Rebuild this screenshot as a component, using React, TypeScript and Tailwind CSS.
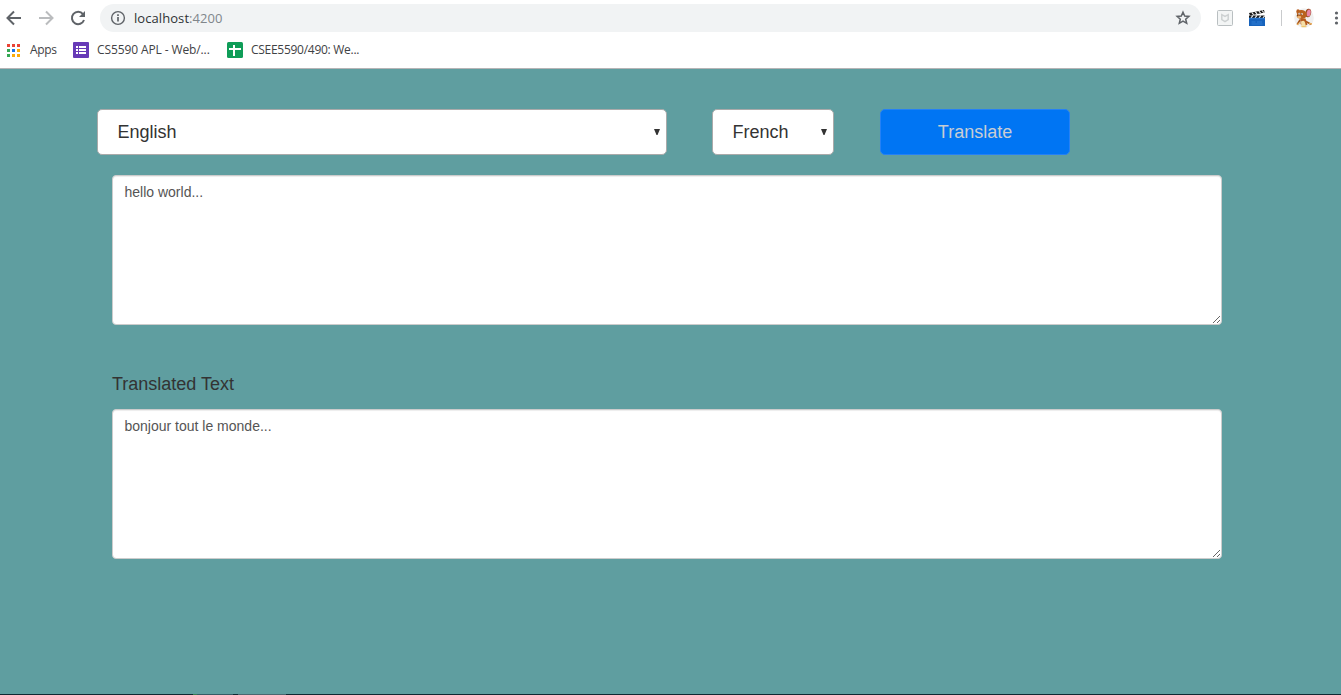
import React from "react";

const APP_COLORS = [
  "#ea4335", "#ea4335", "#ea4335",
  "#34a853", "#1a73e8", "#fbab09",
  "#34a853", "#fbab09", "#fbab09",
];

function BrowserToolbar() {
  return (
    <div className="flex h-[36px] items-center">
      <svg className="ml-[5px] h-[18px] w-[18px] shrink-0" viewBox="0 0 18 18" fill="none" stroke="#5f6368" strokeWidth="2">
        <path d="M16 9H3M9 2.5 2.5 9 9 15.5" />
      </svg>
      <svg className="ml-[14px] h-[18px] w-[18px] shrink-0" viewBox="0 0 18 18" fill="none" stroke="#babcbe" strokeWidth="2">
        <path d="M2 9h13M9 2.5 15.5 9 9 15.5" />
      </svg>
      <svg className="ml-[14px] h-[18px] w-[18px] shrink-0" viewBox="0 0 18 18" fill="none" stroke="#5f6368" strokeWidth="2">
        <path d="M14 5.1A6.2 6.2 0 1 0 15 11" />
        <path d="M16 2v6h-6z" fill="#5f6368" stroke="none" />
      </svg>
      <div className="ml-[13px] flex h-[28px] w-[1101px] shrink-0 items-center rounded-full bg-[#f1f3f4] pl-[10px] pr-[10px]">
        <svg className="h-4 w-4 shrink-0" viewBox="0 0 16 16" fill="none" stroke="#5f6368">
          <circle cx="8" cy="8" r="6.4" strokeWidth="1.4" />
          <path d="M8 7v4.5M8 4.2v1.7" strokeWidth="1.7" />
        </svg>
        <span className="ml-2 whitespace-nowrap font-['Open_Sans','Noto_Sans',sans-serif] text-[13px] leading-[18px] tracking-[0.07px] text-[#2f3235]">
          localhost<span className="text-[#80868b]">:4200</span>
        </span>
        <svg className="ml-auto h-4 w-4 shrink-0" viewBox="0 0 16 16" fill="none" stroke="#5f6368" strokeWidth="1.5">
          <path d="M8 2.2 9.7 6l4.2.4-3.2 2.8 1 4.1L8 11.1l-3.7 2.2 1-4.1L2.1 6.4 6.3 6z" />
        </svg>
      </div>
      <svg className="ml-4 h-4 w-4 shrink-0" viewBox="0 0 16 16" fill="none">
        <rect x=".5" y=".5" width="15" height="15" rx="1" fill="#f3f5f5" stroke="#b9bfc1" />
        <path d="M4.8 4.7 8 6.3l3.2-1.6v5L8 11.7 4.8 9.7z" stroke="#cdd1d2" strokeWidth="1.5" />
      </svg>
      <svg className="ml-[15px] h-[18px] w-[18px] shrink-0" viewBox="0 0 18 18">
        <path d="M1 4 16 1l.6 2.5L2 6.4z" fill="#171717" />
        <path d="m3.8 3.5 1.8 2.1M7.3 2.8l1.8 2.1M10.8 2l1.8 2.2M14 1.5l1.8 2" stroke="#fff" strokeWidth="1.1" />
        <path d="M1 6.5h16V10H1z" fill="#17191c" />
        <path d="m5 6.5-2 2.4M9 6.5 7 8.9M13 6.5l-2 2.4M17 6.5l-2 2.4" stroke="#fff" strokeWidth="1.1" />
        <path d="M1 9h16v8H1z" fill="#1763bc" />
        <path d="M1 9.2h16M3.5 13h4M9 13h5M3.5 15h11" stroke="#3785db" strokeWidth=".8" />
      </svg>
      <div className="ml-[15px] h-4 w-px shrink-0 bg-[#c9cbcd]" />
      <svg className="ml-[12px] h-5 w-5 shrink-0" viewBox="0 0 20 20">
        <circle cx="10" cy="10" r="9.8" fill="#f0f0f0" />
        <path d="M12 13.5 16.5 16M6 12l-2.5 4" fill="none" stroke="#a65317" strokeWidth="1.6" strokeLinecap="round" />
        <ellipse cx="4" cy="3.4" rx="1.7" ry="2.2" fill="#b65d21" />
        <ellipse cx="14.2" cy="5" rx="2.9" ry="4.3" transform="rotate(12 14.2 5)" fill="#9b4b1d" />
        <ellipse cx="14.7" cy="5" rx="2" ry="3.5" transform="rotate(12 14.7 5)" fill="#e987a6" />
        <path d="M3 6Q3 1.5 8 2q4.5.5 4.5 4.5 0 4-4.5 4.5-3.5 0-5-2z" fill="#b9621f" />
        <path d="M6.5 10.5h5l2 6-4 2.5-3-3z" fill="#b65c20" />
        <path d="M7 13.5q3.5-2 4 1l1 4-4.5.5z" fill="#f5dfa8" />
        <path d="M2.5 7.5 7 8.2q1 2-2.5 2-2 0-2-2.7" fill="#eeb574" />
        <circle cx="5.2" cy="5.7" r="1" fill="#fff" />
        <circle cx="7.8" cy="6" r="1" fill="#fff" />
        <path d="M5.1 5.4v1.1M7.5 5.6v1.1M2.8 7.8h1.3" stroke="#321407" strokeWidth=".8" />
        <path d="M3 16.8 5.5 15M15 15.4l3 .6" stroke="#e6ab58" strokeWidth="1.3" />
        <path d="M7.5 18.7h5" stroke="#edc466" strokeWidth="1" />
      </svg>
      <svg className="ml-[20px] h-4 w-[7px] shrink-0" viewBox="0 0 7 16" fill="#5f6368">
        <circle cx="2.5" cy="3" r="1.6" />
        <circle cx="2.5" cy="8" r="1.6" />
        <circle cx="2.5" cy="13" r="1.6" />
      </svg>
    </div>
  );
}

function BookmarksBar() {
  return (
    <div className="flex h-[32px] items-center pb-1 pl-[7px] font-['Open_Sans','Noto_Sans',sans-serif] text-[12px] leading-4 text-[#3f4245]">
      <svg className="h-[13px] w-[13px] shrink-0" viewBox="0 0 13 13" shapeRendering="crispEdges">
        {APP_COLORS.map((color, i) => (
          <rect key={i} x={(i % 3) * 5} y={Math.floor(i / 3) * 5} width="3" height="3" fill={color} />
        ))}
      </svg>
      <span className="ml-[10px] w-[43px] whitespace-nowrap tracking-[-0.35px]">Apps</span>
      <svg className="h-4 w-4 shrink-0" viewBox="0 0 16 16">
        <rect width="16" height="16" rx="1" fill="#673ab7" />
        <path d="M3 4h2v2H3zm3 0h7v2H6zM3 7h2v2H3zm3 0h7v2H6zm-3 3h2v2H3zm3 0h7v2H6z" fill="#fff" />
      </svg>
      <span className="ml-2 w-[130px] whitespace-nowrap tracking-[-0.11px]">CS5590 APL - Web/...</span>
      <svg className="h-4 w-4 shrink-0" viewBox="0 0 16 16">
        <rect width="16" height="16" rx="1.5" fill="#0f9d58" />
        <path d="M6 3h2v3h6v2H8v6H6V8H2V6h4z" fill="#fff" />
      </svg>
      <span className="ml-2 whitespace-nowrap tracking-[-0.28px]">CSEE5590/490: We...</span>
    </div>
  );
}

function SelectBox({ value, className }: { value: string; className: string }) {
  return (
    <button type="button" className={`flex h-[46px] items-center justify-between rounded-[5px] border border-[#aaaaaa] bg-white pl-[19.6px] pr-[6px] text-[18px] leading-6 text-[#333333] ${className}`}>
      <span>{value}</span>
      <svg className="mb-px h-[6px] w-[6px]" viewBox="0 0 6 6" fill="#333333">
        <path d="M0 0h6L3.5 6h-1z" />
      </svg>
    </button>
  );
}

function TextPanel({ label, value }: { label: string; value: string }) {
  return (
    <textarea
      aria-label={label}
      defaultValue={value}
      spellCheck={false}
      className="block h-[150px] w-[1110px] rounded-[4px] border border-[#cccccc] bg-white px-[11.5px] py-[6px] text-[14px] leading-5 text-[#555555] shadow-[inset_0_1px_1px_rgba(0,0,0,0.075)]"
    />
  );
}

export default function App() {
  return (
    <div className="flex h-[695px] w-[1341px] flex-col overflow-hidden bg-white">
      <header className="h-[69px] shrink-0 border-b border-[#b6b4b6]">
        <BrowserToolbar />
        <BookmarksBar />
      </header>
      <main className="flex flex-1 flex-col bg-[#5f9ea0] pt-[40px] font-['Liberation_Sans',Arial,sans-serif]">
        <div className="ml-[97px] flex">
          <SelectBox value="English" className="w-[570px]" />
          <SelectBox value="French" className="ml-[45px] w-[122px]" />
          <button type="button" className="ml-[46px] h-[46px] w-[190px] rounded-[5px] border border-[#2581f5] bg-[#0075f3] text-[18px] leading-6 text-[#c8cdd3]">
            Translate
          </button>
        </div>
        <div className="ml-[112px] mt-[20px]">
          <TextPanel label="Source text" value="hello world..." />
          <h2 className="mb-[13px] mt-[47px] text-[18px] leading-6 text-[#333333]">Translated Text</h2>
          <TextPanel label="Translated Text" value="bonjour tout le monde..." />
        </div>
      </main>
      <div className="flex h-px shrink-0 bg-[#102832]">
        <div className="ml-[193px] h-px w-1 bg-[#397c52]" />
        <div className="h-px w-9 bg-[#365b65]" />
        <div className="ml-[5px] h-px w-12 bg-[#4b6770]" />
      </div>
    </div>
  );
}
